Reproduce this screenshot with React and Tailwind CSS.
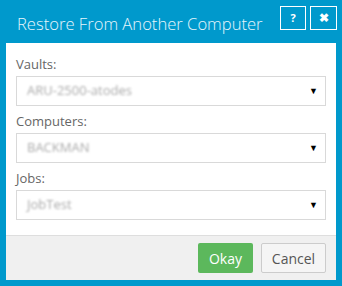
const fields = [
  { label: "Vaults:", value: "ARU-2500-atodes" },
  { label: "Computers:", value: "BACKMAN" },
  { label: "Jobs:", value: "JobTest" },
];

const App = () => {
  return (
    <div
      className="w-[342px] h-[286px] bg-[#0099cc] flex flex-col px-[6px] pb-[6px]"
      style={{ fontFamily: '"Open Sans", sans-serif' }}
    >
      <div className="h-[43px] flex items-start justify-between shrink-0">
        <h1 className="pl-[11px] pt-[12px] text-[16.6px] font-light leading-[24px] text-[#e6f6fc] whitespace-nowrap">
          Restore From Another Computer
        </h1>
        <div className="flex gap-[4px] pt-[6px] -mr-[1px] shrink-0">
          <button className="w-[26px] h-[24px] border border-white text-white text-[11px] font-bold flex items-center justify-center">
            ?
          </button>
          <button className="w-[27px] h-[24px] border border-white text-white text-[12px] font-bold flex items-center justify-center">
            ✖
          </button>
        </div>
      </div>
      <div className="flex-1 bg-white flex flex-col">
        <div className="flex-1 px-[10px] pt-[11px]">
          {fields.map((f) => (
            <div key={f.label} className="mb-[5px]">
              <div className="text-[13px] leading-[20px] text-[#666] mb-[2px]">{f.label}</div>
              <div className="h-[30px] border border-[#d9d9d9] flex items-center justify-between pl-[10px] pr-[7px]">
                <span className="text-[13px] text-[#aaa] blur-[1.2px]">{f.value}</span>
                <span className="text-[9px] text-black">▼</span>
              </div>
            </div>
          ))}
        </div>
        <div className="h-[45px] bg-[#f0f0f0] border-t border-[#dedede] flex items-center justify-end gap-[8px] pr-[10px] shrink-0">
          <button className="w-[55px] h-[30px] bg-[#5cb85c] text-white text-[14px] rounded-[2px]">
            Okay
          </button>
          <button className="w-[65px] h-[30px] bg-[#f5f5f5] border border-[#cccccc] text-[#555] text-[14px] rounded-[2px]">
            Cancel
          </button>
        </div>
      </div>
    </div>
  );
};

export default App;
